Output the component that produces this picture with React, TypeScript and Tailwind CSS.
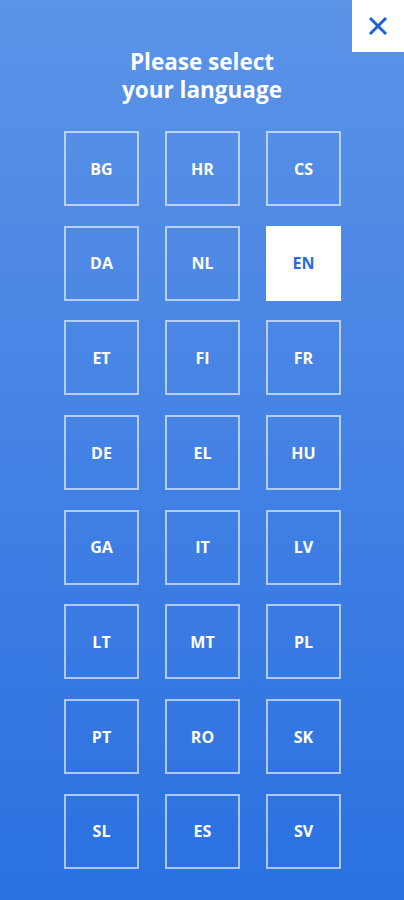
import React from "react";

const langs = [
  "BG", "HR", "CS",
  "DA", "NL", "EN",
  "ET", "FI", "FR",
  "DE", "EL", "HU",
  "GA", "IT", "LV",
  "LT", "MT", "PL",
  "PT", "RO", "SK",
  "SL", "ES", "SV",
];

export default function App() {
  const selected = "EN";
  return (
    <div
      className="relative w-[404px] h-[900px] bg-gradient-to-b from-[#5b93e7] to-[#2a70e1] overflow-hidden"
      style={{ fontFamily: '"Open Sans", "Noto Sans", sans-serif' }}
    >
      <button className="absolute top-0 right-0 w-[52px] h-[52px] bg-white flex items-center justify-center">
        <svg width="20" height="20" viewBox="0 0 20 20">
          <path d="M2 2L18 18M18 2L2 18" stroke="#1d62d4" strokeWidth="3" fill="none" />
        </svg>
      </button>

      <h1 className="pt-[48px] text-center text-white font-bold text-[22.5px] leading-[28px]">
        <span className="block">Please select</span>
        <span className="block">your language</span>
      </h1>

      <div className="mt-[27px] ml-[64px] grid grid-cols-[75px_75px_75px] gap-x-[26px] gap-y-[19.7px]">
        {langs.map((l) =>
          l === selected ? (
            <button
              key={l}
              className="w-[75px] h-[75px] bg-white border-2 border-white flex items-center justify-center text-[16px] font-bold text-[#2a6ad8]"
            >
              {l}
            </button>
          ) : (
            <button
              key={l}
              className="w-[75px] h-[75px] border-2 border-white/60 flex items-center justify-center text-[16px] font-bold text-white"
            >
              {l}
            </button>
          )
        )}
      </div>
    </div>
  );
}
